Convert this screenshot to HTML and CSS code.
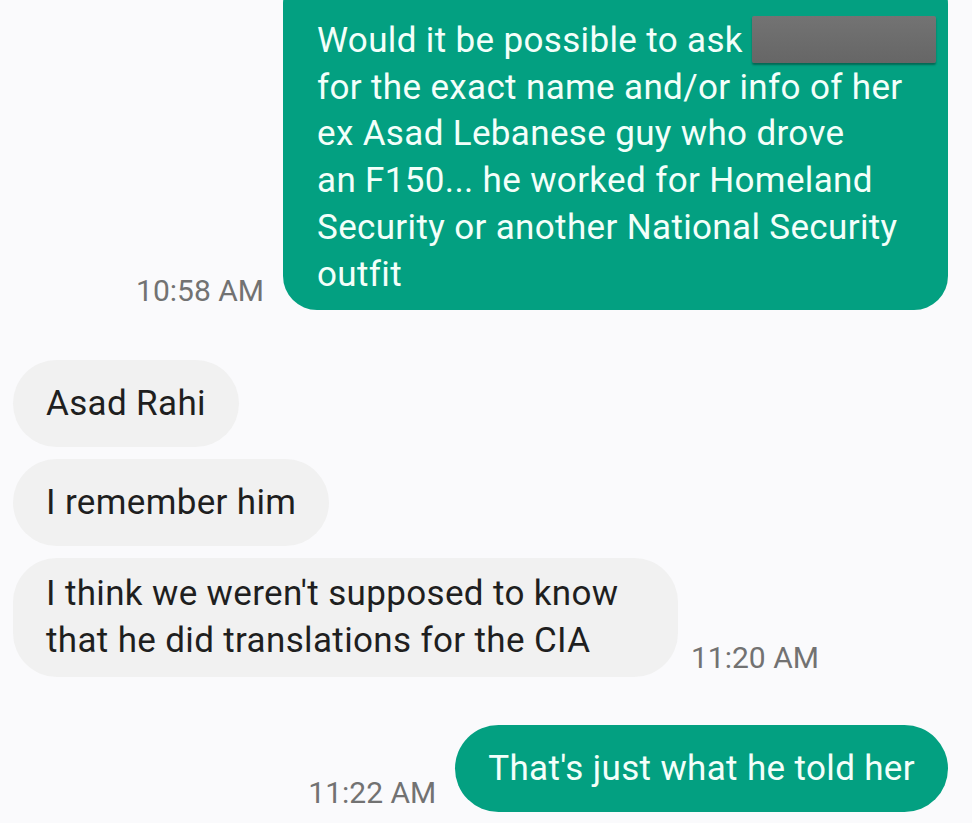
FILE: index.html
```html
<!DOCTYPE html>
<html lang="en">
<head>
<meta charset="utf-8">
<title>Messages</title>
<link rel="stylesheet" href="styles.css">
</head>
<body>
<main class="chat">
  <div class="row out first">
    <span class="time">10:58 AM</span>
    <div class="bubble sent multi wide">Would it be possible to ask <span class="redact"></span><br>for the exact name and/or info of her<br>ex Asad Lebanese guy who drove<br>an F150... he worked for Homeland<br>Security or another National Security<br>outfit</div>
  </div>

  <div class="group in">
    <div class="row">
      <div class="bubble recv">Asad Rahi</div>
    </div>
    <div class="row">
      <div class="bubble recv">I remember him</div>
    </div>
    <div class="row">
      <div class="bubble recv multi">I think we weren't supposed to know<br>that he did translations for the CIA</div>
      <span class="time in-time">11:20 AM</span>
    </div>
  </div>

  <div class="row out last">
    <span class="time">11:22 AM</span>
    <div class="bubble sent">That's just what he told her</div>
  </div>
</main>
</body>
</html>
```

FILE: styles.css
```css
html, body {
  margin: 0;
  padding: 0;
  background: #fafafc;
}

body {
  font-family: Roboto, "Noto Sans", sans-serif;
  overflow: hidden;
}

.chat {
  display: flex;
  flex-direction: column;
  padding: 0 24px 0 13px;
}

.row {
  display: flex;
  align-items: flex-end;
  gap: 19px;
}

.row.out {
  justify-content: flex-end;
}

.row.first {
  margin-top: -30px;
}

.group {
  display: flex;
  flex-direction: column;
  gap: 12px;
  margin-top: 50px;
}

.row.last {
  margin-top: 48px;
}

.bubble {
  font-size: 35px;
  line-height: 47px;
  letter-spacing: 0.35px;
  padding: 20px 33px;
  border-radius: 44px;
  white-space: nowrap;
  box-sizing: border-box;
  min-height: 87px;
}

.bubble.multi {
  width: 665px;
  line-height: 46.7px;
  padding: 13px 33px 12px;
}

.bubble.sent {
  background: #03a081;
  color: #f3fffa;
}

.bubble.recv {
  background: #f1f1f1;
  color: #1f1f1f;
}

.bubble.wide {
  padding: 48px 20px 12px 34px;
  border-radius: 34px;
}

.redact {
  display: inline-block;
  width: 184px;
  height: 47px;
  margin-top: -2px;
  vertical-align: top;
  background: linear-gradient(#737373, #666666);
  border-radius: 2px;
  box-shadow: 0 2px 2px rgba(0, 0, 0, 0.35);
}

.time {
  font-size: 30px;
  line-height: 35px;
  color: #727272;
  margin-bottom: 2px;
  white-space: nowrap;
}

.in-time {
  margin-left: -6px;
}
```
